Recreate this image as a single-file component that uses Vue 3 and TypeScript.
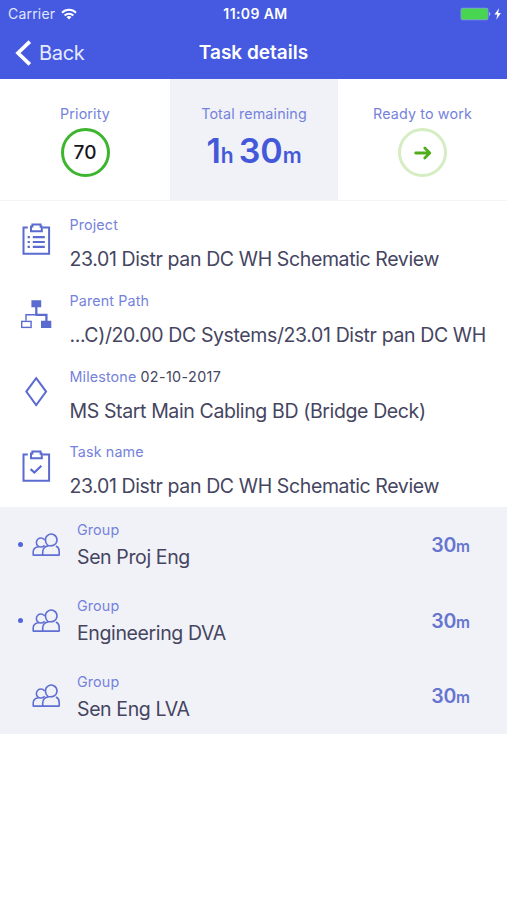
<script setup lang="ts">
type DetailIcon = 'project' | 'path' | 'milestone' | 'task'

interface Detail {
  icon: DetailIcon
  label: string
  extra?: string
  value: string
}

interface Group {
  name: string
  minutes: number
  active: boolean
}

const details: Detail[] = [
  { icon: 'project', label: 'Project', value: '23.01 Distr pan DC WH Schematic Review' },
  { icon: 'path', label: 'Parent Path', value: '...C)/20.00 DC Systems/23.01 Distr pan DC WH' },
  { icon: 'milestone', label: 'Milestone', extra: '02-10-2017', value: 'MS Start Main Cabling BD (Bridge Deck)' },
  { icon: 'task', label: 'Task name', value: '23.01 Distr pan DC WH Schematic Review' },
]

const groups: Group[] = [
  { name: 'Sen Proj Eng', minutes: 30, active: true },
  { name: 'Engineering DVA', minutes: 30, active: true },
  { name: 'Sen Eng LVA', minutes: 30, active: false },
]
</script>

<template>
  <div class="screen">
    <header class="header">
      <div class="status">
        <div class="carrier">
          <span>Carrier</span>
          <svg class="wifi" viewBox="0 0 16 12" fill="none" stroke="#fff" stroke-width="2">
            <path d="M1 4.7a10 10 0 0 1 14 0" />
            <path d="M3.6 7.5a6.2 6.2 0 0 1 8.8 0" />
            <path d="M8 11.6L5.5 9.1a3.6 3.6 0 0 1 5 0z" fill="#fff" stroke="none" />
          </svg>
        </div>
        <span class="clock">11:09 AM</span>
        <div class="power">
          <svg class="battery" viewBox="0 0 41 14">
            <rect x="0.5" y="0.7" width="28" height="12.6" rx="2.2" fill="#8a93ea" />
            <rect x="1.2" y="1.4" width="26.6" height="11.2" rx="1.6" fill="#47d552" />
            <path d="M29.3 5.1a2.3 2.3 0 0 1 0 3.8z" fill="#c9cdf8" />
            <path d="M39.1 1.2L34.4 7.6h2.9l-1 5.2 4.6-6.9h-2.8z" fill="#fff" />
          </svg>
        </div>
      </div>
      <nav class="nav">
        <div class="back">
          <svg class="chevron" viewBox="0 0 17 26" fill="none" stroke="#fff" stroke-width="3.7">
            <path d="M14.8 1.6L3 13l11.8 11.4" />
          </svg>
          <span>Back</span>
        </div>
        <h1 class="title">Task details</h1>
      </nav>
    </header>

    <section class="summary">
      <div class="cell">
        <span class="label">Priority</span>
        <div class="ring priority">70</div>
      </div>
      <div class="cell shaded">
        <span class="label">Total remaining</span>
        <div class="total"><b>1</b><small>h</small><b class="mins">30</b><small>m</small></div>
      </div>
      <div class="cell">
        <span class="label">Ready to work</span>
        <div class="ring ready">
          <svg class="arrow" viewBox="0 0 18 14" fill="none" stroke="#50ad1d" stroke-width="2.8" stroke-linecap="round" stroke-linejoin="round">
            <path d="M1.7 7h14M10.8 2.1L15.8 7l-5 4.9" />
          </svg>
        </div>
      </div>
    </section>

    <section class="details">
      <div v-for="item in details" :key="item.icon" class="detail">
        <svg class="detail-icon" viewBox="0 0 32 34" fill="none" stroke="#5b6bd0" stroke-width="2">
          <template v-if="item.icon === 'project' || item.icon === 'task'">
            <path d="M7.8 4.6H3.5v26.2h25.6V4.6h-6.3" />
            <path d="M11 3.6h1.4V1.6h8.2v2.2h1.2v4.4H11z" />
          </template>
          <template v-if="item.icon === 'project'">
            <path d="M12.8 14.2h12M12.8 19h12M12.8 23.8h12" stroke-width="2.2" />
            <path d="M7.6 14.2h2.3M7.6 19h2.3M7.6 23.8h2.3" stroke-width="2.2" />
          </template>
          <path v-else-if="item.icon === 'task'" d="M10.6 19.2l3.8 3.3 7-6.8" stroke-width="2.2" />
          <template v-else-if="item.icon === 'path'">
            <path d="M11.4 1.2h9.8v7.1h-9.8zM21 21.8h10.3v7.3H21z" fill="#5b6bd0" stroke="none" />
            <path d="M16.3 8v7.7M26.4 22v-6.2H15.5" stroke-width="2.3" />
            <path d="M16.5 15.8H6v6" stroke-width="1.4" />
            <rect x="1.7" y="22.4" width="9.4" height="6" stroke-width="1.4" />
          </template>
          <path v-else d="M16.2 3.2l9.9 13.4-9.9 13.4L6.3 16.6z" />
        </svg>
        <div class="detail-text">
          <div class="label">{{ item.label }}<span v-if="item.extra" class="extra">{{ item.extra }}</span></div>
          <div class="value" :class="item.icon">{{ item.value }}</div>
        </div>
      </div>
    </section>

    <section class="groups">
      <div v-for="group in groups" :key="group.name" class="group">
        <span class="dot" :class="{ active: group.active }"></span>
        <svg class="people" viewBox="0 0 30 26" fill="none" stroke="#5f6fd2" stroke-width="1.6" stroke-linecap="round" stroke-linejoin="round">
          <path d="M14.4 7.8a5.8 5.8 0 1 1 8.6 5.2c-1.6.9-3.6.9-5.4.7-3.4.5-5.9 2.9-5.9 6.4v3h16.5v-3.6c0-2.4-.9-4.2-2.8-5.2" />
          <path d="M14.4 7.8c0 2.3.7 4.2 2.5 5.6" />
          <path d="M13.2 7.5a4.5 4.5 0 1 0-.1 6.2" />
          <path d="M7.2 14.7c-3.3.7-5 2.6-5 5.2v3.2h9.5" />
        </svg>
        <div class="group-text">
          <div class="label">Group</div>
          <div class="value">{{ group.name }}</div>
        </div>
        <div class="time">{{ group.minutes }}<small>m</small></div>
      </div>
    </section>
  </div>
</template>

<style>
body {
  background: #fff;
}
</style>

<style scoped>
.screen {
  width: 507px;
  height: 900px;
  overflow: hidden;
  background: #fff;
  font-family: Inter, 'Liberation Sans', sans-serif;
  color: #45455f;
}

.header {
  box-sizing: border-box;
  height: 79px;
  background: #455ae0;
  color: #fff;
}

.status {
  display: grid;
  grid-template-columns: 1fr auto 1fr;
  align-items: center;
  height: 27px;
  padding: 0 6px 0 8px;
  font-size: 14px;
}

.carrier {
  display: flex;
  align-items: center;
  gap: 6px;
  color: #e1e5ff;
  letter-spacing: 0.2px;
}

.wifi {
  width: 16px;
  height: 12px;
}

.clock {
  padding-left: 2px;
  font-size: 14px;
  font-weight: 600;
  letter-spacing: 0.4px;
}

.power {
  display: flex;
  justify-content: flex-end;
}

.battery {
  width: 41px;
  height: 14px;
}

.nav {
  display: grid;
  grid-template-columns: 1fr auto 1fr;
  align-items: center;
  height: 51px;
  padding: 0 15px;
}

.back {
  display: flex;
  align-items: center;
  gap: 7px;
  font-size: 20px;
  letter-spacing: -0.3px;
  color: #e6eaff;
}

.chevron {
  width: 17px;
  height: 26px;
}

.title {
  margin: 0;
  font-size: 19px;
  font-weight: 600;
}

.summary {
  display: grid;
  grid-template-columns: 170px 168px 169px;
  height: 121px;
  border-bottom: 1px solid #f4f4f8;
}

.cell {
  display: flex;
  flex-direction: column;
  align-items: center;
  padding-top: 25px;
}

.shaded {
  background: #f1f2f8;
}

.label {
  font-size: 14.3px;
  line-height: 20px;
  letter-spacing: 0.14px;
  color: #7582dc;
  white-space: nowrap;
}

.ring {
  box-sizing: border-box;
  display: flex;
  align-items: center;
  justify-content: center;
  width: 49px;
  height: 49px;
  margin-top: 4px;
  border-radius: 50%;
}

.priority {
  border: 3.5px solid #3db52f;
  color: #15151c;
  font-size: 19px;
  font-weight: 500;
}

.ready {
  border: 3px solid #d5edc3;
}

.arrow {
  width: 18px;
  height: 14px;
}

.total {
  display: flex;
  align-items: baseline;
  margin-top: 6px;
  line-height: 41px;
  color: #4459d9;
}

.total b {
  font-size: 34px;
  font-weight: 600;
}

.total .mins {
  margin-left: 5px;
}

.total small {
  font-size: 21px;
  font-weight: 600;
}

.details {
  box-sizing: border-box;
  height: 306px;
  padding-top: 3.4px;
}

.detail {
  display: flex;
  height: 75.7px;
  padding-left: 20px;
}

.detail-icon {
  width: 32px;
  height: 34px;
  margin-top: 19px;
}

.detail-text {
  padding: 11px 0 0 17.5px;
}

.extra {
  margin-left: 4px;
  letter-spacing: 0.4px;
  color: #45455f;
}

.value {
  font-size: 19.5px;
  line-height: 24px;
  letter-spacing: -0.38px;
  white-space: nowrap;
}

.detail .value {
  margin-top: 12px;
}

.groups {
  height: 227px;
  background: #f1f2f8;
}

.group {
  display: flex;
  align-items: center;
  height: 75.7px;
  padding: 0 37px 0 18px;
}

.dot {
  width: 5px;
  height: 5px;
  border-radius: 50%;
}

.dot.active {
  background: #5266db;
}

.people {
  width: 30px;
  height: 26px;
  margin-left: 8px;
}

.group-text {
  flex: 1;
  padding: 0 0 0 16px;
}

.group .value {
  margin-top: 5px;
}

.time {
  font-size: 19.5px;
  font-weight: 600;
  letter-spacing: -0.3px;
  color: #6675cf;
}

.time small {
  font-size: 15.5px;
  letter-spacing: 0;
}
</style>
